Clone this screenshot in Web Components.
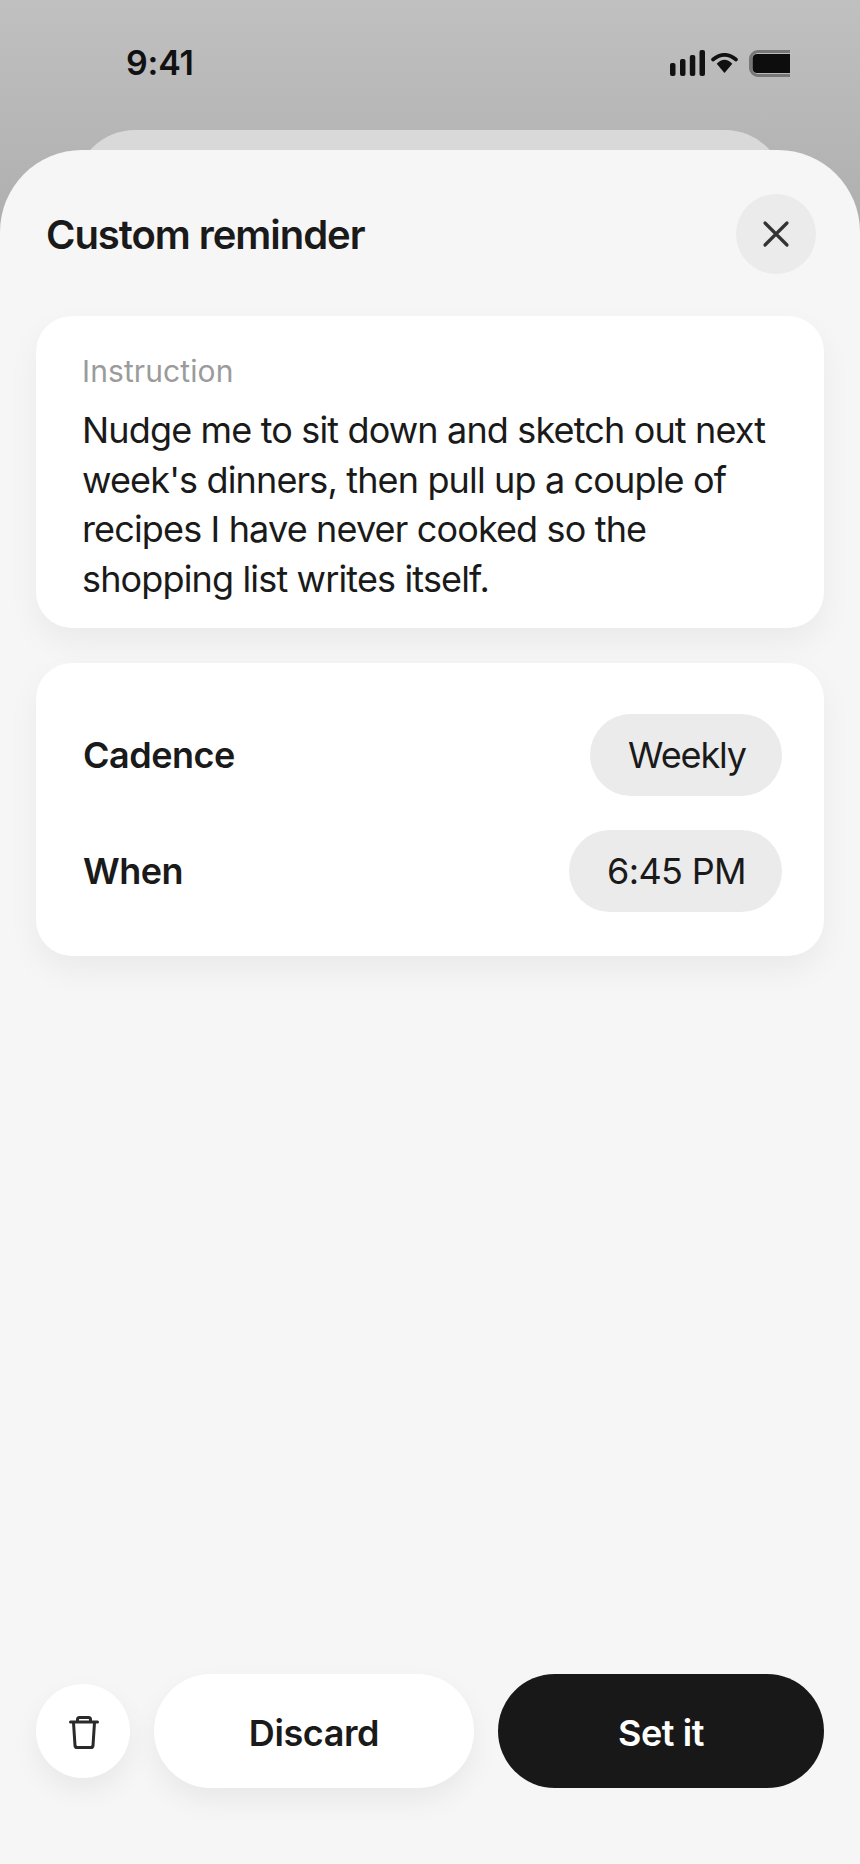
<!DOCTYPE html>
<html>
<head>
<meta charset="utf-8">
<title>Custom reminder</title>
<style>
  html, body { margin: 0; padding: 0; height: 100%; }
  body { font-family: Inter, "Liberation Sans", sans-serif; color: #1a1a1a; }
</style>
</head>
<body>
<reminder-screen>
  <status-bar slot="status" time="9:41"></status-bar>
  <reminder-sheet heading="Custom reminder">
    <info-card class="instruction">
      <instruction-block label="Instruction">Nudge me to sit down and sketch out next week's dinners, then pull up a couple of recipes I have never cooked so the shopping list writes itself.</instruction-block>
    </info-card>
    <info-card>
      <setting-rows>
        <setting-row label="Cadence" value="Weekly" tracking="-1.1px"></setting-row>
        <setting-row label="When" value="6:45 PM" tracking="-0.65px"></setting-row>
      </setting-rows>
    </info-card>
    <action-bar slot="footer"></action-bar>
  </reminder-sheet>
</reminder-screen>

<script>
class ReminderScreen extends HTMLElement {
  constructor() {
    super();
    this.attachShadow({ mode: "open" }).innerHTML = `
    <style>
      :host {
        display: flex;
        flex-direction: column;
        width: 860px;
        height: 1864px;
        overflow: hidden;
        background: linear-gradient(#c0c0c0, #aeaeae 240px);
      }
      .status { display: block; height: 130px; flex: none; }
      .back {
        flex: none;
        height: 20px;
        margin: 0 75px;
        overflow: hidden;
      }
      .back div {
        height: 120px;
        border-radius: 60px;
        background: #d9d9d9;
      }
      .front { flex: 1; display: flex; min-height: 0; }
    </style>
    <div class="status"><slot name="status"></slot></div>
    <div class="back"><div></div></div>
    <div class="front"><slot></slot></div>
    `;
  }
}

class StatusBar extends HTMLElement {
  constructor() {
    super();
    this.attachShadow({ mode: "open" }).innerHTML = `
    <style>
      :host {
        display: flex;
        align-items: center;
        justify-content: space-between;
        height: 126px;
        padding: 0 70px 0 126px;
        box-sizing: border-box;
      }
      .time { font-size: 34px; font-weight: 600; color: #111; line-height: 1; letter-spacing: -0.2px; }
      .icons { display: flex; align-items: center; }
      .wifi { margin: 0 11px 0 6px; }
      svg { display: block; }
    </style>
    <span class="time">${this.getAttribute("time")}</span>
    <div class="icons">
      <svg width="35" height="26" viewBox="0 0 35 26" fill="#111">
        <rect x="0" y="13" width="5.5" height="13" rx="2"/>
        <rect x="10" y="9" width="5.5" height="17" rx="2"/>
        <rect x="19.8" y="5" width="5.5" height="21" rx="2"/>
        <rect x="29.5" y="0" width="5.5" height="26" rx="2"/>
      </svg>
      <svg class="wifi" width="27" height="20" viewBox="0 0 27 20" fill="none">
        <path d="M2 6.5 Q13.5 -2.9 25 6.5" stroke="#111" stroke-width="3.6" stroke-linecap="round"/>
        <path d="M5.7 10.7 Q13.5 2.7 21.3 10.7 L13.5 20 Z" fill="#111"/>
      </svg>
      <svg width="41" height="27" viewBox="0 0 41 27">
        <path d="M41 1.5 H9 A7.5 7.5 0 0 0 1.5 9 V18 A7.5 7.5 0 0 0 9 25.5 H41" fill="none" stroke="#777" stroke-width="3"/>
        <path d="M41 4 H8 A4.5 4.5 0 0 0 3.5 8.500 V18.500 A4.500 4.500 0 0 0 8 23 H41 Z" fill="#0d0d0d"/>
      </svg>
    </div>
    `;
  }
}

class ReminderSheet extends HTMLElement {
  constructor() {
    super();
    this.attachShadow({ mode: "open" }).innerHTML = `
    <style>
      :host {
        display: flex;
        flex-direction: column;
        flex: 1;
        width: 860px;
        box-sizing: border-box;
        background: #f6f6f6;
        border-radius: 82px 82px 0 0;
        padding: 44px 36px 76px;
      }
      header {
        display: flex;
        align-items: center;
        justify-content: space-between;
        height: 80px;
        padding: 0 8px 0 10px;
        margin-bottom: 42px;
      }
      h1 { margin: 0; font-size: 40px; font-weight: 600; letter-spacing: -1.05px; color: #1a1a1a; }
      .close {
        width: 80px; height: 80px; border-radius: 50%;
        background: #ebebeb;
        display: flex; align-items: center; justify-content: center;
      }
      .cards { flex: 1; display: flex; flex-direction: column; gap: 34.5px; }
    </style>
    <header>
      <h1>${this.getAttribute("heading")}</h1>
      <div class="close">
        <svg width="28" height="28" viewBox="0 0 28 28" fill="none" stroke="#333" stroke-width="3.2" stroke-linecap="round">
          <path d="M3 3 L25 25 M25 3 L3 25"/>
        </svg>
      </div>
    </header>
    <div class="cards"><slot></slot></div>
    <slot name="footer"></slot>
    `;
  }
}

class InfoCard extends HTMLElement {
  constructor() {
    super();
    this.attachShadow({ mode: "open" }).innerHTML = `
    <style>
      :host {
        display: block;
        background: #fff;
        border-radius: 36px;
        box-shadow: 0 14px 32px rgba(0, 0, 0, 0.05);
      }
    </style>
    <slot></slot>
    `;
  }
}

class InstructionBlock extends HTMLElement {
  constructor() {
    super();
    this.attachShadow({ mode: "open" }).innerHTML = `
    <style>
      :host { display: block; padding: 37px 40px 24px 46px; }
      .label { font-size: 30px; line-height: 36px; color: #9b9b9b; margin-bottom: 17px; letter-spacing: 0.1px; }
      .text { font-size: 36px; line-height: 49.5px; letter-spacing: -0.85px; color: #1a1a1a; }
    </style>
    <div class="label">${this.getAttribute("label")}</div>
    <div class="text"><slot></slot></div>
    `;
  }
}

class SettingRows extends HTMLElement {
  constructor() {
    super();
    this.attachShadow({ mode: "open" }).innerHTML = `
    <style>
      :host { display: flex; flex-direction: column; gap: 34px; padding: 51.5px 42px 44px 47px; }
    </style>
    <slot></slot>
    `;
  }
}

class SettingRow extends HTMLElement {
  constructor() {
    super();
    this.attachShadow({ mode: "open" }).innerHTML = `
    <style>
      :host { display: flex; align-items: center; justify-content: space-between; }
      .label { font-size: 36px; font-weight: 600; letter-spacing: -0.5px; color: #1a1a1a; }
      .chip {
        height: 82px; padding: 0 36px 0 38px;
        display: flex; align-items: center;
        border-radius: 41px;
        background: #ebebeb;
        font-size: 36px; letter-spacing: ${this.getAttribute("tracking")}; color: #1a1a1a;
      }
    </style>
    <span class="label">${this.getAttribute("label")}</span>
    <span class="chip">${this.getAttribute("value")}</span>
    `;
  }
}

class ActionBar extends HTMLElement {
  constructor() {
    super();
    this.attachShadow({ mode: "open" }).innerHTML = `
    <style>
      :host { display: flex; align-items: center; gap: 24px; }
      .trash {
        flex: none; width: 94px; height: 94px; border-radius: 50%;
        background: #fff;
        display: flex; align-items: center; justify-content: center;
        box-shadow: 0 12px 28px rgba(0, 0, 0, 0.06);
      }
      .btn {
        height: 114px; border-radius: 57px;
        box-sizing: border-box; padding-top: 3px;
        display: flex; align-items: center; justify-content: center;
        font-size: 36px; font-weight: 600; letter-spacing: -0.4px;
      }
      .discard { width: 320px; background: #fff; color: #1a1a1a; box-shadow: 0 12px 28px rgba(0, 0, 0, 0.06); }
      .set { width: 326px; background: #181818; color: #fff; }
      svg { display: block; margin: 3px 0 0 2px; }
    </style>
    <div class="trash">
      <svg width="30" height="33" viewBox="0 0 30 33" fill="none" stroke="#2a2a2a" stroke-width="3" stroke-linejoin="round" stroke-linecap="round">
        <path d="M1.500 6 H28.500"/>
        <path d="M8.500 5.500 V3.500 Q8.500 1.500 10.500 1.500 H19.500 Q21.500 1.500 21.500 3.500 V5.500"/>
        <path d="M4.500 6.500 L6 29.500 Q6.200 31.500 8 31.500 H22 Q23.800 31.500 24 29.500 L25.500 6.500"/>
      </svg>
    </div>
    <div class="btn discard">Discard</div>
    <div class="btn set">Set it</div>
    `;
  }
}

customElements.define("reminder-screen", ReminderScreen);
customElements.define("status-bar", StatusBar);
customElements.define("reminder-sheet", ReminderSheet);
customElements.define("info-card", InfoCard);
customElements.define("instruction-block", InstructionBlock);
customElements.define("setting-rows", SettingRows);
customElements.define("setting-row", SettingRow);
customElements.define("action-bar", ActionBar);
</script>
</body>
</html>
